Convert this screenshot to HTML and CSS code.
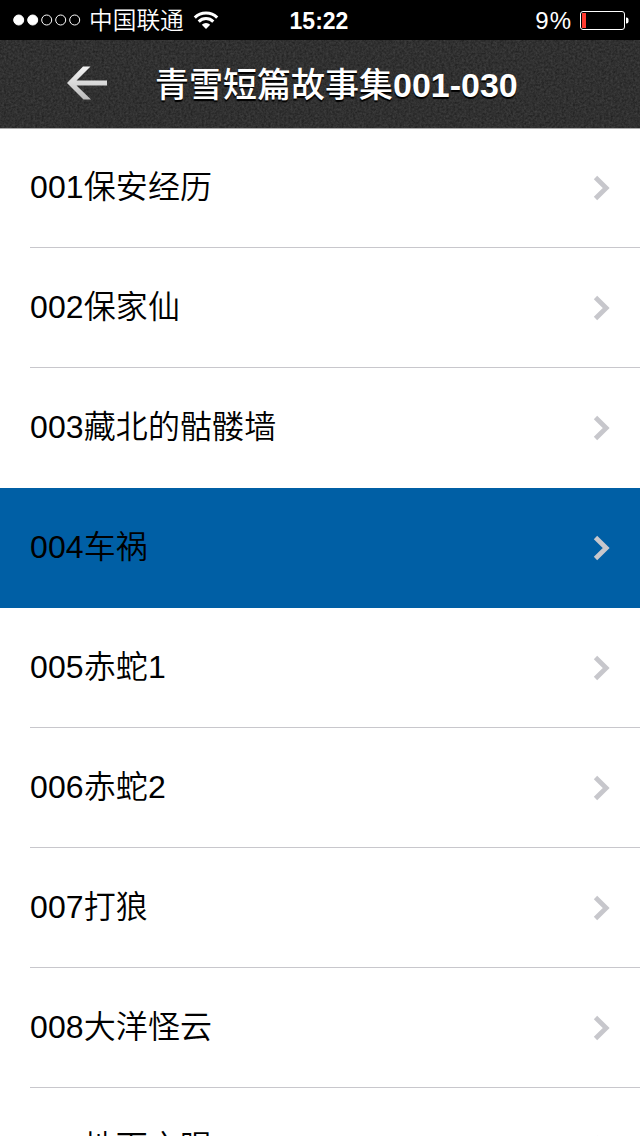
FILE: index.html
```html
<!DOCTYPE html>
<html lang="zh">
<head>
    <meta charset="UTF-8">
    <meta name="viewport" content="width=device-width, initial-scale=1.0">
    <title>青雪短篇故事集001-030</title>
    <link rel="stylesheet" href="styles.css">
</head>
<body>
    <div class="status">
        <div class="carrier">
            <svg class="signal" width="68" height="12" viewBox="0 0 68 12">
                <g fill="#fff" stroke="#fff">
                    <circle cx="5.7" cy="6" r="5"/>
                    <circle cx="19.7" cy="6" r="5"/>
                    <circle cx="33.7" cy="6" r="5" fill="none"/>
                    <circle cx="47.7" cy="6" r="5" fill="none"/>
                    <circle cx="61.7" cy="6" r="5" fill="none"/>
                </g>
            </svg>
            <span class="name">中国联通</span>
            <svg class="wifi" width="26" height="20" viewBox="0 0 26 20">
                <g fill="none" stroke="#fff" stroke-width="3">
                    <path d="M1.8 7.6a15.8 15.8 0 0 1 22.4 0"/>
                    <path d="M5.7 11.6a10.3 10.3 0 0 1 14.6 0"/>
                </g>
                <path d="M13 19l-4.2-4.2a6 6 0 0 1 8.4 0z" fill="#fff"/>
            </svg>
        </div>
        <div class="time">15:22</div>
        <div class="power">
            <span class="percent">9%</span>
            <svg width="50" height="20" viewBox="0 0 50 20">
                <rect x="1.5" y="1.5" width="44" height="18" rx="2.5" fill="none" stroke="#fff"/>
                <rect x="3" y="3" width="4" height="15" fill="#ff3b30"/>
                <path d="M47 7.5h.5a2 2 0 0 1 2 2v2a2 2 0 0 1-2 2H47z" fill="#fff"/>
            </svg>
        </div>
    </div>
    <div class="header">
        <svg class="grain" width="640" height="88">
            <filter id="grain" x="0" y="0" width="100%" height="100%" color-interpolation-filters="sRGB">
                <feTurbulence type="fractalNoise" baseFrequency=".45" numOctaves="3" seed="4"/>
                <feColorMatrix values=".16 0 0 0 .11  .16 0 0 0 .11  .16 0 0 0 .11  0 0 0 0 1"/>
            </filter>
            <rect width="640" height="88" filter="url(#grain)"/>
        </svg>
        <a class="back" href="#">
            <svg width="41" height="34" viewBox="0 0 41 34">
                <defs>
                    <linearGradient id="silver" x1="0" y1="0" x2="0" y2="1">
                        <stop offset="0" stop-color="#f4f4f4"/>
                        <stop offset="1" stop-color="#bdbdbd"/>
                    </linearGradient>
                </defs>
                <path d="M0 17L16 0.5h7.5L9.5 14.5H40v5H9.5L24 33.5h-7.5z" fill="url(#silver)"/>
            </svg>
        </a>
        <h1 class="title">青雪短篇故事集<b>001-030</b></h1>
    </div>
    <svg class="defs" width="0" height="0">
        <symbol id="arrow" viewBox="0 0 18 26">
            <path d="M2.5 2.5L13.2 13 2.5 23.5" fill="none" stroke="#c7c7cc" stroke-width="4.8"/>
        </symbol>
    </svg>
    <ul class="list">
        <li><a href="#"><span>001保安经历</span><svg class="arrow"><use href="#arrow"/></svg></a></li>
        <li><a href="#"><span>002保家仙</span><svg class="arrow"><use href="#arrow"/></svg></a></li>
        <li class="before"><a href="#"><span>003藏北的骷髅墙</span><svg class="arrow"><use href="#arrow"/></svg></a></li>
        <li class="active"><a href="#"><span>004车祸</span><svg class="arrow"><use href="#arrow"/></svg></a></li>
        <li><a href="#"><span>005赤蛇1</span><svg class="arrow"><use href="#arrow"/></svg></a></li>
        <li><a href="#"><span>006赤蛇2</span><svg class="arrow"><use href="#arrow"/></svg></a></li>
        <li><a href="#"><span>007打狼</span><svg class="arrow"><use href="#arrow"/></svg></a></li>
        <li><a href="#"><span>008大洋怪云</span><svg class="arrow"><use href="#arrow"/></svg></a></li>
        <li><a href="#"><span>009地下之眼</span><svg class="arrow"><use href="#arrow"/></svg></a></li>
    </ul>
</body>
</html>
```
FILE: styles.css
```css
*{
    margin: 0;
    padding: 0;
    box-sizing: border-box;
}
html{
    overflow: hidden;
}
body{
    width: 640px;
    height: 1136px;
    overflow: hidden;
    background-color: #fff;
    font-family: "Liberation Sans", "Noto Sans CJK SC", sans-serif;
}
ul li{
    list-style: none;
}
a{
    color: #000;
    text-decoration: none;
}
.status{
    display: grid;
    grid-template-columns: 270px 98px 1fr;
    align-items: center;
    height: 40px;
    background-color: #000;
    color: #fff;
    font-size: 24px;
    line-height: 40px;
}
.carrier{
    display: flex;
    align-items: center;
    padding-left: 13px;
}
.name{
    margin: 0 9px 0 8px;
    padding-top: 2px;
    font-size: 23.7px;
    font-weight: 350;
    line-height: 38px;
}
.time{
    padding-top: 2px;
    text-align: center;
    font-size: 23px;
    font-weight: bold;
    line-height: 38px;
}
.power{
    display: flex;
    justify-content: flex-end;
    align-items: center;
    padding-right: 11px;
}
.percent{
    margin-right: 7px;
    padding-top: 2px;
    letter-spacing: 1px;
    line-height: 38px;
}
.header{
    position: relative;
    display: flex;
    align-items: center;
    height: 88px;
    padding-left: 67px;
    background-color: #303030;
    box-shadow: 0 1px 0 #aaa;
}
.grain{
    position: absolute;
    left: 0;
    top: 0;
}
.back, .title{
    position: relative;
}
.back svg{
    display: block;
    margin-top: -3px;
}
.title{
    margin-left: 47px;
    padding-top: 1px;
    color: #fff;
    font-size: 34px;
    font-weight: 500;
    line-height: 86px;
    white-space: nowrap;
    text-shadow: 0 2px 1px #000;
}
.defs{
    display: block;
}
.list{
    height: 1008px;
    overflow: hidden;
}
.list li{
    height: 120px;
    padding-left: 30px;
}
.list li a{
    display: flex;
    justify-content: space-between;
    align-items: center;
    height: 120px;
    padding-right: 29px;
    border-bottom: 1px solid #c8c7cc;
    font-size: 32px;
    font-weight: 350;
    letter-spacing: .1px;
}
.list li span{
    padding-bottom: 7px;
}
.list .before a, .list .active a{
    border-bottom-color: transparent;
}
.list .active{
    background-color: #005fa5;
}
.arrow{
    width: 18px;
    height: 26px;
    margin-top: 1px;
}
```
